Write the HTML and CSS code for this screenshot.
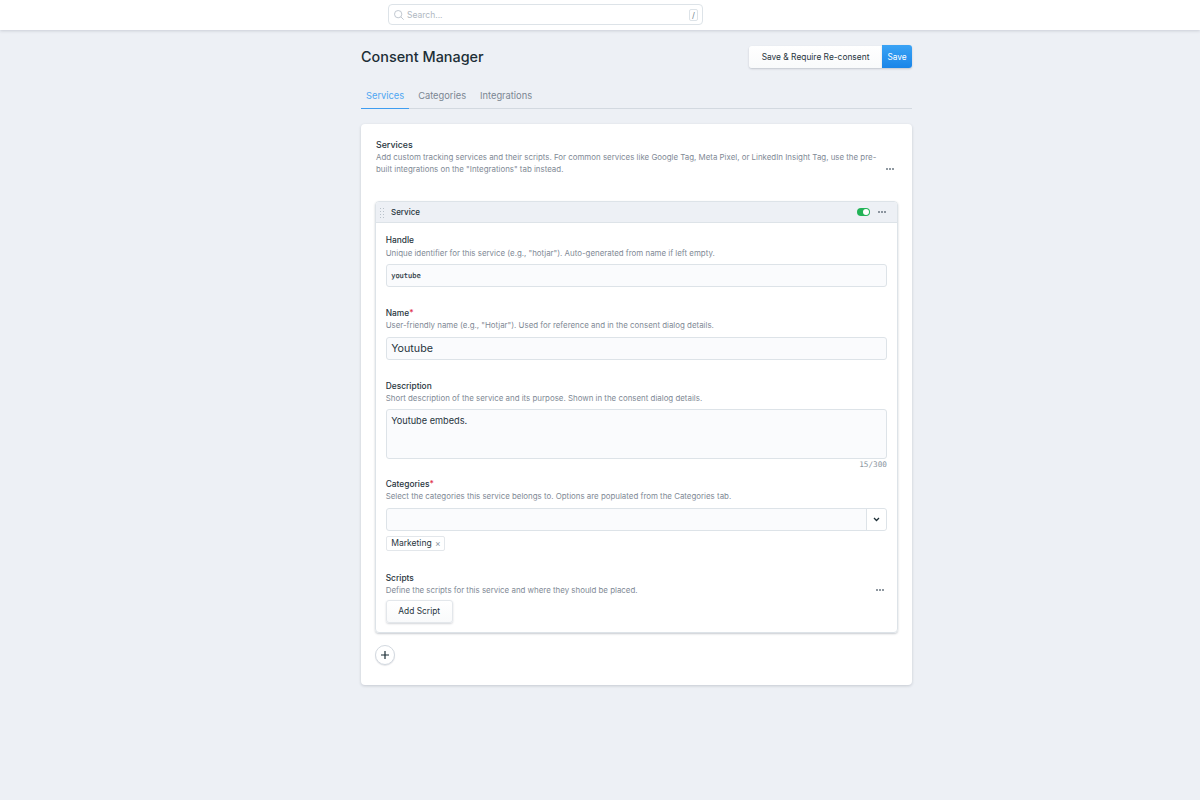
FILE: index.html
```html
<!DOCTYPE html>
<html lang="en">
<head>
    <meta charset="UTF-8">
    <meta name="viewport" content="width=device-width, initial-scale=1.0">
    <title>Consent Manager</title>
    <link rel="stylesheet" href="styles.css">
</head>
<body>
    <header class="topbar">
        <div class="search">
            <svg class="search-icon" width="10" height="10" viewBox="0 0 12 12" fill="none" stroke="#b5bdc6" stroke-width="1"><circle cx="5" cy="5" r="4.4"/><path d="M8.2 8.2l3.4 3.4"/></svg>
            <span class="search-text">Search...</span>
            <span class="search-key">/</span>
        </div>
    </header>

    <main class="page">
        <div class="page-head">
            <h1>Consent Manager</h1>
            <div class="actions">
                <button class="btn-white">Save &amp; Require Re-consent</button>
                <button class="btn-blue">Save</button>
            </div>
        </div>

        <nav class="tabs">
            <a class="tab active">Services</a>
            <a class="tab">Categories</a>
            <a class="tab">Integrations</a>
        </nav>

        <section class="card">
            <div class="card-head">
                <div class="card-intro">
                    <div class="label">Services</div>
                    <div class="help">Add custom tracking services and their scripts. For common services like Google Tag, Meta Pixel, or LinkedIn Insight Tag, use the pre-built integrations on the "Integrations" tab instead.</div>
                </div>
                <span class="dots"><i></i><i></i><i></i></span>
            </div>

            <div class="set">
                <div class="set-head">
                    <span class="grip"></span>
                    <span class="set-title">Service</span>
                    <span class="toggle"><i></i></span>
                    <span class="dots"><i></i><i></i><i></i></span>
                </div>
                <div class="set-body">
                    <div class="field field-handle">
                        <div class="label">Handle</div>
                        <div class="help">Unique identifier for this service (e.g., "hotjar"). Auto-generated from name if left empty.</div>
                        <div class="input mono">youtube</div>
                    </div>
                    <div class="field field-name">
                        <div class="label">Name<span class="req">*</span></div>
                        <div class="help">User-friendly name (e.g., "Hotjar"). Used for reference and in the consent dialog details.</div>
                        <div class="input">Youtube</div>
                    </div>
                    <div class="field field-desc">
                        <div class="label">Description</div>
                        <div class="help">Short description of the service and its purpose. Shown in the consent dialog details.</div>
                        <div class="input textarea">Youtube embeds.</div>
                        <div class="counter">15/300</div>
                    </div>
                    <div class="field field-cats">
                        <div class="label">Categories<span class="req">*</span></div>
                        <div class="help">Select the categories this service belongs to. Options are populated from the Categories tab.</div>
                        <div class="select">
                            <div class="select-value"></div>
                            <div class="select-arrow">
                                <svg width="7" height="5" viewBox="0 0 8 6" fill="none" stroke="#1c2e36" stroke-width="1.5"><path d="M1 1.2l3 3 3-3"/></svg>
                            </div>
                        </div>
                        <span class="tag">Marketing <b>×</b></span>
                    </div>
                    <div class="field-scripts">
                        <div class="scripts-text">
                            <div class="label">Scripts</div>
                            <div class="help">Define the scripts for this service and where they should be placed.</div>
                            <button class="btn-add">Add Script</button>
                        </div>
                        <span class="dots"><i></i><i></i><i></i></span>
                    </div>
                </div>
            </div>

            <button class="btn-round">
                <svg width="8" height="8" viewBox="0 0 8 8" stroke="#1c2e36" stroke-width="1.2"><path d="M4 0v8M0 4h8"/></svg>
            </button>
        </section>
    </main>
</body>
</html>
```

FILE: styles.css
```css
* {
    box-sizing: border-box;
}

body {
    margin: 0;
    background: #edf0f5;
    color: #27353d;
    font-family: Inter, "Liberation Sans", sans-serif;
    font-size: 8.4px;
    line-height: 12px;
    height: 800px;
    overflow: hidden;
}

.topbar {
    height: 30px;
    background: #fff;
    box-shadow: 0 1px 3px rgba(40, 50, 70, 0.18);
    padding: 4px 0 0 388px;
}

.search {
    width: 315px;
    height: 21px;
    border: 1px solid #dde3e8;
    border-radius: 4px;
    display: flex;
    align-items: center;
    padding: 0 4px 0 5px;
    color: #b0b8c2;
}

.search-text {
    margin-left: 3px;
    flex: 1;
    font-size: 8.5px;
}

.search-key {
    width: 9px;
    height: 12px;
    border: 1px solid #dde3e8;
    border-radius: 2px;
    font-size: 8px;
    line-height: 10px;
    text-align: center;
    color: #737f8c;
}

.page {
    width: 551px;
    margin-left: 361px;
}

.page-head {
    display: flex;
    justify-content: space-between;
    align-items: flex-start;
    margin-top: 15px;
    height: 23px;
}

h1 {
    margin: 0;
    font-size: 14.4px;
    font-weight: 500;
    line-height: 23px;
    color: #1c2e36;
}

.actions {
    display: flex;
}

button {
    font-family: inherit;
    border: 0;
    margin: 0;
    padding: 0;
}

.btn-white {
    width: 133px;
    height: 22px;
    margin-top: 1px;
    background: linear-gradient(#fff, #f9fafb);
    border-radius: 3px 0 0 3px;
    box-shadow: 0 1px 2px rgba(40, 50, 70, 0.22);
    font-size: 8.4px;
    color: #27353d;
}

.btn-blue {
    width: 30px;
    height: 23px;
    background: linear-gradient(#3aa3f5, #1a85e8);
    border-radius: 0 3px 3px 0;
    box-shadow: 0 1px 2px rgba(40, 50, 70, 0.22);
    font-size: 8.3px;
    color: #fff;
}

.tabs {
    display: flex;
    gap: 4px;
    margin-top: 16px;
    height: 25px;
    border-bottom: 1px solid #d3d9e0;
}

.tab {
    height: 25px;
    padding: 0 5px;
    line-height: 24px;
    font-size: 9.3px;
    color: #7b8692;
}

.tab.active {
    color: #4ea6f2;
    border-bottom: 1px solid #3f9df0;
}

.card {
    margin-top: 15px;
    height: 561px;
    background: #fff;
    border-radius: 4px;
    box-shadow: 0 1px 3px rgba(40, 50, 70, 0.2);
    padding: 15px 14px 0;
}

.card-head {
    display: flex;
    align-items: flex-end;
    gap: 4px;
    padding-left: 1px;
    padding-right: 4px;
}

.card-intro {
    flex: 1;
}

.label {
    font-weight: 500;
    font-size: 8.4px;
    line-height: 12px;
}

.card-intro .label {
    font-size: 8.8px;
}

.req {
    color: #e0314b;
}

.help {
    color: #7f8a96;
    font-size: 7.9px;
    line-height: 12px;
}

.dots {
    display: flex;
    gap: 1px;
    padding-bottom: 5px;
}

.dots i {
    width: 2px;
    height: 2px;
    border-radius: 50%;
    background: #6b7782;
}

.set {
    margin-top: 26px;
    height: 432px;
    border: 1px solid #dde3e8;
    border-radius: 4px;
    box-shadow: 0 1px 2px rgba(40, 50, 70, 0.25);
}

.set-head {
    height: 21px;
    display: flex;
    align-items: center;
    background: #edf0f5;
    border-bottom: 1px solid #dde3e8;
    border-radius: 3px 3px 0 0;
    padding-left: 3px;
    padding-right: 11px;
}

.set-head .dots {
    padding-bottom: 0;
}

.grip {
    width: 6px;
    height: 11px;
    background-image: radial-gradient(#b9c2ca 0.6px, transparent 0.8px);
    background-size: 3px 3px;
}

.set-title {
    flex: 1;
    margin-left: 6px;
    font-size: 8px;
    font-weight: 500;
}

.toggle {
    width: 13px;
    height: 8px;
    margin-right: 8px;
    padding: 1px;
    background: #22b357;
    border-radius: 4px;
    display: flex;
    justify-content: flex-end;
}

.toggle i {
    width: 6px;
    height: 6px;
    border-radius: 50%;
    background: #fff;
}

.set-body {
    padding: 12px 10px 0 9.7px;
}

.set-body .label {
    margin-top: -1px;
}

.input {
    height: 23px;
    margin-top: 6px;
    background: #fafbfd;
    border: 1px solid #dde3e8;
    border-radius: 3px;
    padding: 0 4.5px;
    font-size: 10.7px;
    line-height: 22px;
}

.mono {
    font-family: "DejaVu Sans Mono", "Liberation Mono", monospace;
    font-size: 7px;
    color: #1c2e36;
    -webkit-text-stroke: 0.15px #1c2e36;
}

.textarea {
    height: 50px;
    font-size: 9.2px;
    line-height: 22px;
}

.field-handle {
    height: 73.6px;
}

.field-handle .help {
    margin-top: 1px;
}

.field-handle .input {
    margin-top: 5px;
}

.field-name {
    height: 73.6px;
}

.field-desc {
    height: 98.8px;
}

.field-desc .label {
    margin-top: 0;
}

.field-desc .input {
    margin-top: 4.6px;
}

.counter {
    text-align: right;
    font-family: "DejaVu Sans Mono", "Liberation Mono", monospace;
    font-size: 7.7px;
    line-height: 12px;
    color: #8a95a0;
}

.field-cats {
    height: 94px;
}

.select {
    display: flex;
    height: 23px;
    margin-top: 6px;
    background: #fafbfd;
    border: 1px solid #dde3e8;
    border-radius: 3px;
}

.select-value {
    flex: 1;
}

.select-arrow {
    width: 20px;
    display: flex;
    align-items: center;
    justify-content: center;
    background: #fff;
    border-left: 1px solid #dde3e8;
    border-radius: 0 3px 3px 0;
}

.tag {
    display: inline-block;
    width: 59px;
    height: 15px;
    margin-top: 5px;
    padding: 0 4.5px;
    border: 1px solid #e3e7eb;
    border-radius: 2px;
    font-size: 8.55px;
    line-height: 13px;
    white-space: nowrap;
}

.tag b {
    font-weight: 400;
    color: #8a95a0;
    margin-left: 1px;
}

.field-scripts {
    display: flex;
    align-items: flex-start;
    justify-content: space-between;
    padding-right: 3px;
}

.field-scripts .label {
    margin-top: 0;
}

.field-scripts .dots {
    margin-top: 17px;
    padding-bottom: 0;
}

.btn-add {
    display: block;
    width: 67px;
    height: 23px;
    margin-top: 4px;
    background: linear-gradient(#fff, #f9fafb);
    border: 1px solid #e3e7eb;
    border-radius: 3px;
    box-shadow: 0 1px 2px rgba(40, 50, 70, 0.2);
    font-size: 8.4px;
    color: #27353d;
}

.btn-round {
    display: flex;
    align-items: center;
    justify-content: center;
    width: 20px;
    height: 20px;
    margin-top: 12px;
    background: #fff;
    border: 1px solid #d3d9e0;
    border-radius: 50%;
    box-shadow: 0 1px 1px rgba(40, 50, 70, 0.12);
}
```
